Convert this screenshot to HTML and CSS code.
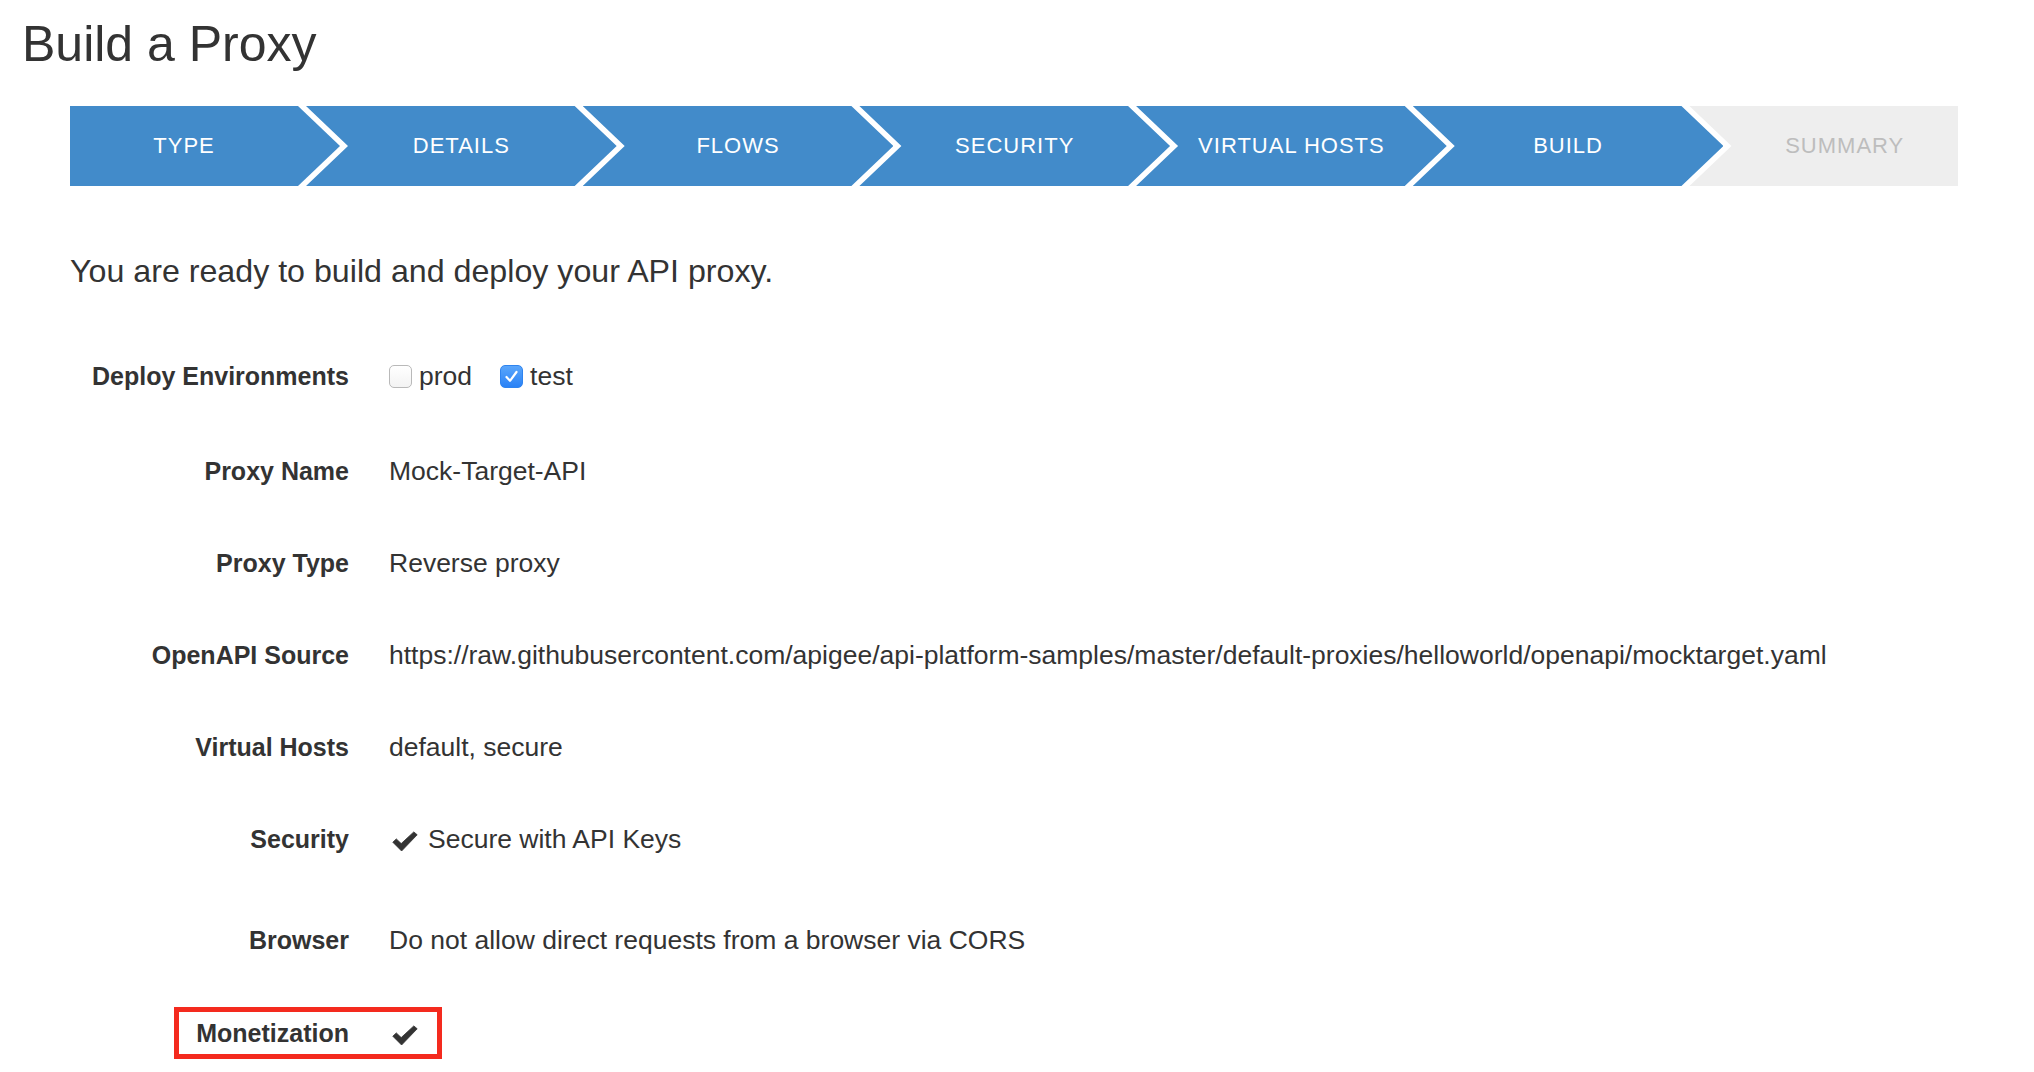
FILE: index.html
```html
<!DOCTYPE html>
<html lang="en">
<head>
<meta charset="utf-8">
<title>Build a Proxy</title>
<link rel="stylesheet" href="styles.css">
</head>
<body>
<div class="page">
  <h1 class="title">Build a Proxy</h1>
  <div class="content">
    <ol class="steps">
      <li class="step step-first">TYPE</li>
      <li class="step">DETAILS</li>
      <li class="step">FLOWS</li>
      <li class="step">SECURITY</li>
      <li class="step">VIRTUAL HOSTS</li>
      <li class="step">BUILD</li>
      <li class="step step-last">SUMMARY</li>
    </ol>

    <p class="intro">You are ready to build and deploy your API proxy.</p>

    <div class="details">
      <div class="row row-env">
        <div class="label">Deploy Environments</div>
        <div class="value value-env">
          <span class="checkbox"></span><span class="env-name">prod</span>
          <span class="checkbox checkbox-on"><svg viewBox="0 0 23 23" width="23" height="23"><path d="M6.5 12 L10 15.8 L16.5 7" fill="none" stroke="#fff" stroke-width="2.2" stroke-linecap="round" stroke-linejoin="round"/></svg></span><span class="env-name">test</span>
        </div>
      </div>
      <div class="row">
        <div class="label">Proxy Name</div>
        <div class="value">Mock-Target-API</div>
      </div>
      <div class="row">
        <div class="label">Proxy Type</div>
        <div class="value">Reverse proxy</div>
      </div>
      <div class="row">
        <div class="label">OpenAPI Source</div>
        <div class="value">https://raw.githubusercontent.com/apigee/api-platform-samples/master/default-proxies/helloworld/openapi/mocktarget.yaml</div>
      </div>
      <div class="row">
        <div class="label">Virtual Hosts</div>
        <div class="value">default, secure</div>
      </div>
      <div class="row row-sec">
        <div class="label">Security</div>
        <div class="value value-icon">
          <svg class="check" viewBox="0 0 26 21" width="26" height="21"><path d="M0.8 11.2 L4.3 7.9 L9.2 12.6 L21.8 0.9 L25.2 3.8 L9.6 20 Z" fill="#333" stroke="#333" stroke-width="0.8" stroke-linejoin="round"/></svg>
          <span>Secure with API Keys</span>
        </div>
      </div>
      <div class="row row-browser">
        <div class="label">Browser</div>
        <div class="value">Do not allow direct requests from a browser via CORS</div>
      </div>
      <div class="row row-money">
        <div class="label">Monetization</div>
        <div class="value value-icon">
          <svg class="check" viewBox="0 0 26 21" width="26" height="21"><path d="M0.8 11.2 L4.3 7.9 L9.2 12.6 L21.8 0.9 L25.2 3.8 L9.6 20 Z" fill="#333" stroke="#333" stroke-width="0.8" stroke-linejoin="round"/></svg>
        </div>
        <div class="highlight"></div>
      </div>
    </div>
  </div>
</div>
</body>
</html>
```

FILE: styles.css
```css
* {
  box-sizing: border-box;
}

html, body {
  margin: 0;
  padding: 0;
  background: #ffffff;
}

body {
  font-family: "Liberation Sans", Arial, Helvetica, sans-serif;
  color: #333333;
}

.page {
  padding-top: 15px;
}

.title {
  margin: 0;
  padding-left: 22px;
  font-size: 50px;
  line-height: 58px;
  font-weight: normal;
  color: #333333;
}

.content {
  margin-left: 70px;
  width: 1888px;
}

/* Wizard steps */
.steps {
  list-style: none;
  margin: 33px 0 0 0;
  padding: 0;
  display: flex;
  height: 80px;
}

.step {
  flex: 0 0 310.7px;
  height: 80px;
  margin-left: -34px;
  padding: 0 42px;
  background: #428bca;
  color: #ffffff;
  font-size: 22px;
  letter-spacing: 1px;
  line-height: 79px;
  text-align: center;
  white-space: nowrap;
  clip-path: polygon(0 0, calc(100% - 42px) 0, 100% 50%, calc(100% - 42px) 100%, 0 100%, 42px 50%);
}

.step-first {
  flex: 0 0 270px;
  margin-left: 0;
  padding-left: 0;
  clip-path: polygon(0 0, calc(100% - 42px) 0, 100% 50%, calc(100% - 42px) 100%, 0 100%);
}

.step-last {
  flex: 1 1 auto;
  padding-right: 0;
  background: #eeeeee;
  color: #bdbdbd;
  clip-path: polygon(0 0, 100% 0, 100% 100%, 0 100%, 42px 50%);
}

/* Intro */
.intro {
  margin: 65px 0 0 0;
  font-size: 32.2px;
  line-height: 40px;
  color: #333333;
}

/* Detail rows */
.details {
  margin-top: 67px;
}

.row {
  position: relative;
  display: flex;
  align-items: center;
  height: 36px;
  margin-bottom: 56px;
}

.row-env {
  margin-bottom: 59px;
}

.row-sec {
  margin-bottom: 65px;
}

.row-browser {
  margin-bottom: 57px;
}

.label {
  flex: 0 0 279px;
  margin-right: 40px;
  text-align: right;
  font-size: 25px;
  font-weight: bold;
  line-height: 36px;
  color: #333333;
  white-space: nowrap;
}

.value {
  font-size: 26.5px;
  line-height: 36px;
  color: #333333;
  white-space: nowrap;
}

.value-env {
  display: flex;
  align-items: center;
}

.checkbox {
  display: inline-block;
  width: 23px;
  height: 23px;
  border: 1px solid #b9b9b9;
  border-radius: 5px;
  background: linear-gradient(#ffffff, #f3f3f3);
  margin-right: 7px;
}

.checkbox svg {
  display: block;
  margin: -1px;
}

.checkbox-on {
  border-color: #2f84ef;
  background: linear-gradient(#5aa6fb, #2a82f6);
}

.env-name {
  margin-right: 28px;
}

.value-icon {
  display: flex;
  align-items: center;
}

.check {
  display: block;
  margin: 4px 10px 0 3px;
}

.highlight {
  position: absolute;
  left: 104px;
  top: -8px;
  width: 268px;
  height: 52px;
  border: 5px solid #f42a1e;
  pointer-events: none;
}
```
